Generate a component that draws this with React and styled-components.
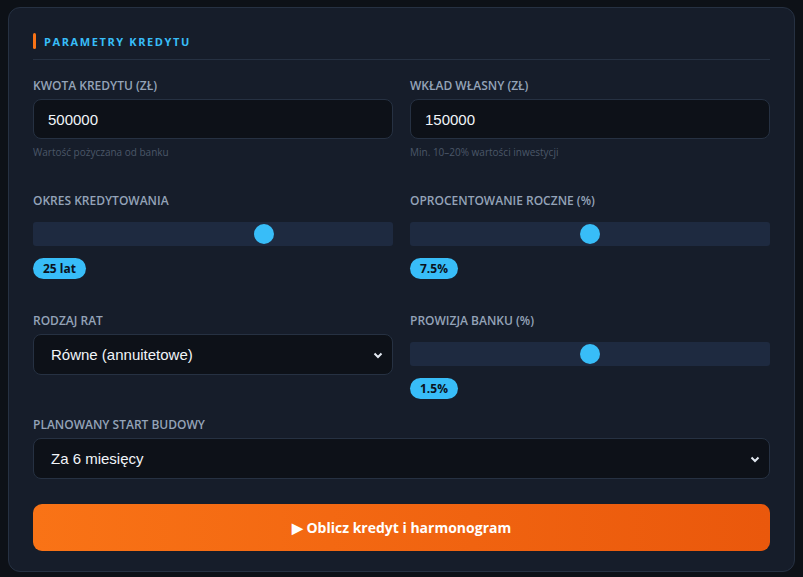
import React from 'react';
import styled, { createGlobalStyle } from 'styled-components';

const Global = createGlobalStyle`
  body {
    margin: 0;
    background: #0d1117;
    font-family: "Open Sans", "Noto Sans", sans-serif;
  }
`;

const Card = styled.div`
  margin: 7px 8px;
  height: 565px;
  box-sizing: border-box;
  background: #161d2a;
  border: 1px solid #263142;
  border-radius: 12px;
  padding: 25px 24px 0 24px;
`;

const Header = styled.div`
  display: flex;
  align-items: center;
  gap: 8px;
  padding-bottom: 10px;
  border-bottom: 1px solid #263142;
  margin-bottom: 19px;
`;

const Bar = styled.span`
  width: 3px;
  height: 16px;
  border-radius: 2px;
  background: #f97316;
`;

const Title = styled.h2`
  margin: 0;
  font-size: 11px;
  font-weight: 700;
  letter-spacing: 1.6px;
  color: #38bdf8;
`;

const Grid = styled.div`
  display: grid;
  grid-template-columns: 1fr 1fr;
  column-gap: 17px;
  align-items: start;
  margin-bottom: ${(p) => p.$mb}px;
`;

const Field = styled.div`
  display: flex;
  flex-direction: column;
`;

const Label = styled.label`
  font-size: 12px;
  line-height: 14px;
  font-weight: 600;
  color: #94a3b8;
  text-transform: uppercase;
  margin-bottom: ${(p) => p.$mb || 6}px;
`;

const Input = styled.input`
  height: 40px;
  box-sizing: border-box;
  background: #0d1118;
  border: 1px solid #263142;
  border-radius: 8px;
  color: #f1f5f9;
  font-family: "Liberation Sans", Arial, sans-serif;
  font-size: 15px;
  padding: 0 14px;
  outline: none;
`;

const SelectBox = styled.div`
  position: relative;
  height: 41px;
  box-sizing: border-box;
  background: #0d1118;
  border: 1px solid #263142;
  border-radius: 8px;
  color: #f1f5f9;
  font-family: "Liberation Sans", Arial, sans-serif;
  font-size: 15px;
  padding: 0 17px;
  display: flex;
  align-items: center;
  justify-content: space-between;
  padding-right: 8px;
`;

const Hint = styled.div`
  font-size: 10px;
  color: #4b5768;
  margin-top: 6px;
`;

const Track = styled.div`
  position: relative;
  height: 24px;
  border-radius: 3px;
  background: #1e2a40;
`;

const Thumb = styled.span`
  position: absolute;
  top: 2px;
  width: 20px;
  height: 20px;
  margin-left: -10px;
  border-radius: 50%;
  background: #38bdf8;
`;

const Badge = styled.span`
  align-self: flex-start;
  margin-top: 12px;
  padding: 2px 10px;
  border-radius: 11px;
  background: #38bdf8;
  color: #0b1220;
  font-size: 12px;
  font-weight: 700;
  line-height: 17px;
`;

const Button = styled.button`
  width: 100%;
  height: 47px;
  border: none;
  border-radius: 9px;
  background: linear-gradient(90deg, #f97316, #ea580c);
  color: #fff;
  font-family: "Open Sans", sans-serif;
  font-size: 14px;
  font-weight: 700;
  display: flex;
  align-items: center;
  justify-content: center;
  gap: 6px;
`;

const Chevron = () => (
  <svg width="12" height="12" viewBox="0 0 12 12">
    <path d="M2.5 4.5 L6 8 L9.5 4.5" stroke="#e2e8f0" strokeWidth="2" fill="none" />
  </svg>
);

const Slider = ({ label, pct, value }) => (
  <Field>
    <Label $mb={14}>{label}</Label>
    <Track>
      <Thumb style={{ left: `${pct}%` }} />
    </Track>
    <Badge>{value}</Badge>
  </Field>
);

const Select = ({ value }) => (
  <SelectBox>
    <span>{value}</span>
    <Chevron />
  </SelectBox>
);

export default function App() {
  return (
    <>
      <Global />
      <Card>
        <Header>
          <Bar />
          <Title>PARAMETRY KREDYTU</Title>
        </Header>
        <Grid $mb={35}>
          <Field>
            <Label>Kwota kredytu (zł)</Label>
            <Input defaultValue="500000" />
            <Hint>Wartość pożyczana od banku</Hint>
          </Field>
          <Field>
            <Label>Wkład własny (zł)</Label>
            <Input defaultValue="150000" />
            <Hint>Min. 10–20% wartości inwestycji</Hint>
          </Field>
        </Grid>
        <Grid $mb={35}>
          <Slider label="Okres kredytowania" pct={64.3} value="25 lat" />
          <Slider label="Oprocentowanie roczne (%)" pct={50} value="7.5%" />
        </Grid>
        <Grid $mb={19}>
          <Field>
            <Label>Rodzaj rat</Label>
            <Select value="Równe (annuitetowe)" />
          </Field>
          <Slider label="Prowizja banku (%)" pct={50} value="1.5%" />
        </Grid>
        <Field style={{ marginBottom: 25 }}>
          <Label>Planowany start budowy</Label>
          <Select value="Za 6 miesięcy" />
        </Field>
        <Button>▶ Oblicz kredyt i harmonogram</Button>
      </Card>
    </>
  );
}
